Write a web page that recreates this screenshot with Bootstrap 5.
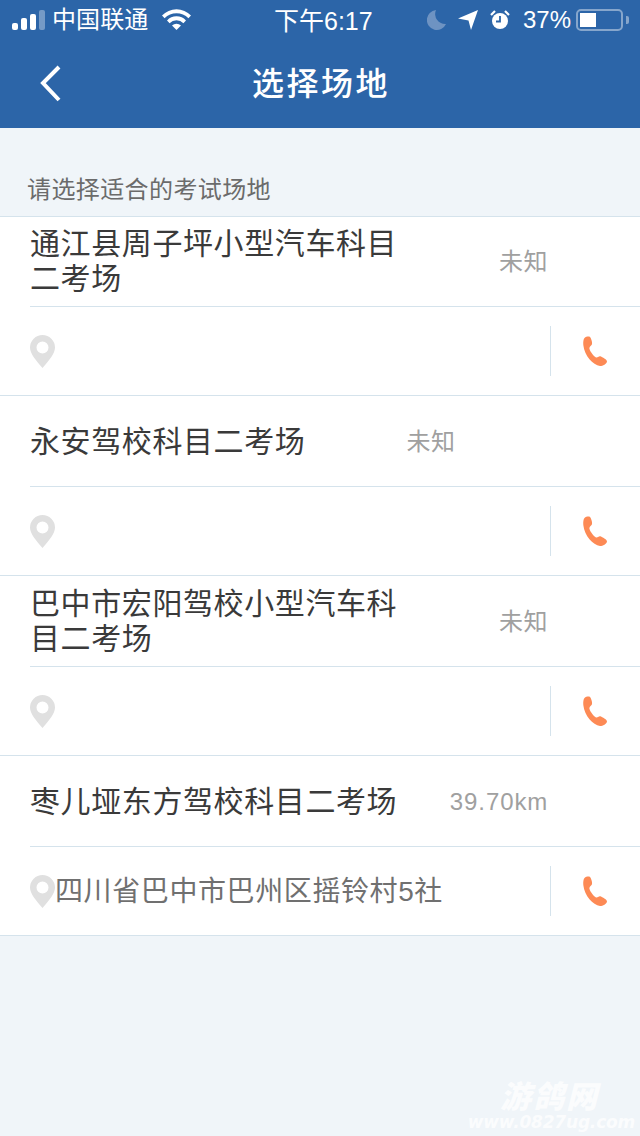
<!DOCTYPE html>
<html lang="zh-CN">
<head>
    <meta charset="UTF-8">
    <meta name="viewport" content="width=device-width, initial-scale=1.0">
    <title>选择场地</title>
    <link href="https://cdn.jsdelivr.net/npm/bootstrap@5.3.0/dist/css/bootstrap.min.css" rel="stylesheet">
    <style>
        html, body {
            height: 1136px;
        }
        body {
            width: 640px;
            background-color: #f0f5f9;
            font-family: "Liberation Sans", "Noto Sans CJK SC", sans-serif;
            overflow: hidden;
            position: relative;
        }
        .top-bar {
            background-color: #2c65a8;
            color: #fff;
            height: 128px;
        }
        .status-line {
            height: 40px;
            padding: 0 11px 0 12px;
            font-size: 24px;
            line-height: 42px;
        }
        .signal-bars i {
            display: block;
            width: 6px;
            margin-right: 3px;
            background: #fff;
            border-radius: 2px;
        }
        .carrier { margin-left: 4px; letter-spacing: .1px; }
        .wifi-icon { margin-left: 14px; margin-top: -2px; }
        .clock {
            position: absolute;
            left: 274px;
            top: 0;
            font-size: 25px;
        }
        .batt-box {
            width: 47px;
            height: 22px;
            border: 2px solid #86a6cc;
            border-radius: 5px;
            padding: 2px;
            margin-left: 5px;
        }
        .batt-box span {
            display: block;
            width: 16px;
            height: 100%;
            background: #fff;
        }
        .batt-nub {
            width: 3px;
            height: 8px;
            margin-left: 3px;
            background: #86a6cc;
            border-radius: 0 2px 2px 0;
        }
        .nav-line {
            height: 88px;
            position: relative;
        }
        .back-btn {
            position: absolute;
            left: 38px;
            top: 24px;
        }
        .nav-title {
            font-size: 32px;
            font-weight: 500;
            letter-spacing: 2.500px;
            line-height: 88px;
            padding-left: 2px;
        }
        .hint-text {
            height: 88px;
            padding: 47px 0 0 27px;
            font-size: 24px;
            line-height: 30px;
            letter-spacing: .4px;
            color: #6b6b6b;
        }
        .site-list {
            border-top: 1px solid #d5e3ec;
        }
        .site-item {
            background: #fff;
            border-bottom: 1px solid #d5e3ec;
            padding-left: 30px;
        }
        .name-row {
            height: 91px;
            border-bottom: 1px solid #d5e3ec;
        }
        .site-item:first-child .name-row {
            height: 90px;
            padding-bottom: 1px;
        }
        .site-name {
            max-width: 368px;
            font-size: 30px;
            line-height: 35px;
            letter-spacing: .6px;
            color: #3a3a3a;
        }
        .site-dist {
            width: 150px;
            padding-top: 1px;
            font-size: 24px;
            letter-spacing: .5px;
            color: #a0a0a0;
            text-align: right;
            flex: none;
        }
        .dist-km {
            width: 151px;
            letter-spacing: .9px;
        }
        .addr-row {
            height: 88px;
        }
        .addr-text {
            font-size: 28px;
            color: #707070;
            letter-spacing: .6px;
            white-space: nowrap;
            padding-top: 2px;
        }
        .pin-icon {
            flex: none;
        }
        .phone-cell {
            width: 90px;
            height: 50px;
            border-left: 1px solid #d5e3ec;
            padding-right: 2px;
        }
        .water-mark {
            position: absolute;
            right: 5px;
            bottom: 3px;
            color: rgba(255, 255, 255, .75);
            font-style: italic;
            font-weight: 700;
            text-align: center;
        }
        .water-mark b {
            display: block;
            font-size: 31px;
            line-height: 26px;
            letter-spacing: 2px;
            padding-right: 36px;
            text-align: right;
        }
        .water-mark span {
            display: block;
            font-size: 17px;
            line-height: 22px;
            font-family: "DejaVu Sans", sans-serif;
            letter-spacing: -.2px;
        }
    </style>
</head>
<body>
    <svg width="0" height="0" class="position-absolute">
        <symbol id="ico-pin" viewBox="0 0 25 33">
            <path fill-rule="evenodd" d="M12.500 0A12.500 12.500 0 0 1 25 12.500c0 6-6 13-12.500 20.500C6 25.500 0 18.500 0 12.500A12.500 12.500 0 0 1 12.500 0zm0 6.500a6 6 0 1 0 0 12 6 6 0 0 0 0-12z" fill="#e0e0e0"/>
        </symbol>
        <symbol id="ico-phone" viewBox="0 0 24 30">
            <path d="M1.500 2C3 .5 6 .2 7 1c1 1 2.500 5 2 7-.5 2-3 2.500-2.500 5 1 3 4 7 6.500 8.500 2 .5 2.500-2 5-1 2 1 6 3 6 5-.5 2.500-4 4.500-7 4.500C10 29 1.500 20 .3 9 0 6 .5 3 1.500 2z" fill="#fd8a55"/>
        </symbol>
    </svg>

    <header class="top-bar">
        <div class="status-line d-flex align-items-center position-relative">
            <div class="signal-bars d-flex align-items-end">
                <i style="height:7px"></i><i style="height:12px"></i><i style="height:16px"></i><i style="height:20px;opacity:.35"></i>
            </div>
            <span class="carrier">中国联通</span>
            <svg class="wifi-icon" width="29" height="21" viewBox="0 0 29 21">
                <path d="M0 6.500a20 20 0 0 1 29 0l-2.600 2.800a16.500 16.500 0 0 0-23.800 0z" fill="#fff"/>
                <path d="M5 11.500a13 13 0 0 1 19 0l-2.600 2.800a9.500 9.500 0 0 0-13.800 0z" fill="#fff"/>
                <path d="M10 16.500a6.500 6.500 0 0 1 9 0L14.500 21z" fill="#fff"/>
            </svg>
            <span class="clock">下午6:17</span>
            <div class="ms-auto d-flex align-items-center">
                <svg width="20" height="20" viewBox="0 0 20 20" style="margin-right:11px">
                    <path d="M9 0a10 10 0 1 0 10 14A10 10 0 0 1 9 0z" fill="#6e93c2"/>
                </svg>
                <svg width="20" height="20" viewBox="0 0 20 20">
                    <path d="M20 0 13 20l-2.500-9.500L0 8.500z" fill="#fff"/>
                </svg>
                <svg width="20" height="20" viewBox="0 0 20 20" style="margin-left:12px">
                    <circle cx="10" cy="11" r="8" fill="#fff"/>
                    <path d="M10 6v5.500H6" fill="none" stroke="#2c65a8" stroke-width="1.800"/>
                    <path d="M1 5 5 1M15 1l4 4" stroke="#fff" stroke-width="2.200"/>
                </svg>
                <span style="margin-left:13px">37%</span>
                <div class="batt-box"><span></span></div>
                <div class="batt-nub"></div>
            </div>
        </div>
        <div class="nav-line text-center">
            <svg class="back-btn" width="26" height="40" viewBox="0 0 26 40">
                <path d="M21 3 5 19l16 17" fill="none" stroke="#fff" stroke-width="4"/>
            </svg>
            <div class="nav-title">选择场地</div>
        </div>
    </header>

    <div class="hint-text">请选择适合的考试场地</div>

    <div class="site-list">
        <div class="site-item">
            <div class="name-row d-flex align-items-center">
                <div class="site-name">通江县周子坪小型汽车科目二考场</div>
                <div class="site-dist">未知</div>
            </div>
            <div class="addr-row d-flex align-items-center">
                <svg class="pin-icon" width="25" height="33"><use href="#ico-pin"/></svg>
                <div class="addr-text"></div>
                <div class="phone-cell ms-auto d-flex align-items-center justify-content-center">
                    <svg width="24" height="30"><use href="#ico-phone"/></svg>
                </div>
            </div>
        </div>
        <div class="site-item">
            <div class="name-row d-flex align-items-center">
                <div class="site-name">永安驾校科目二考场</div>
                <div class="site-dist">未知</div>
            </div>
            <div class="addr-row d-flex align-items-center">
                <svg class="pin-icon" width="25" height="33"><use href="#ico-pin"/></svg>
                <div class="addr-text"></div>
                <div class="phone-cell ms-auto d-flex align-items-center justify-content-center">
                    <svg width="24" height="30"><use href="#ico-phone"/></svg>
                </div>
            </div>
        </div>
        <div class="site-item">
            <div class="name-row d-flex align-items-center">
                <div class="site-name">巴中市宏阳驾校小型汽车科目二考场</div>
                <div class="site-dist">未知</div>
            </div>
            <div class="addr-row d-flex align-items-center">
                <svg class="pin-icon" width="25" height="33"><use href="#ico-pin"/></svg>
                <div class="addr-text"></div>
                <div class="phone-cell ms-auto d-flex align-items-center justify-content-center">
                    <svg width="24" height="30"><use href="#ico-phone"/></svg>
                </div>
            </div>
        </div>
        <div class="site-item">
            <div class="name-row d-flex align-items-center">
                <div class="site-name">枣儿垭东方驾校科目二考场</div>
                <div class="site-dist dist-km">39.70km</div>
            </div>
            <div class="addr-row d-flex align-items-center">
                <svg class="pin-icon" width="25" height="33"><use href="#ico-pin"/></svg>
                <div class="addr-text">四川省巴中市巴州区摇铃村5社</div>
                <div class="phone-cell ms-auto d-flex align-items-center justify-content-center">
                    <svg width="24" height="30"><use href="#ico-phone"/></svg>
                </div>
            </div>
        </div>
    </div>

    <div class="water-mark">
        <b>游鸽网</b>
        <span>www.0827ug.com</span>
    </div>
    <script src="https://cdn.jsdelivr.net/npm/bootstrap@5.3.0/dist/js/bootstrap.bundle.min.js"></script>
</body>
</html>
